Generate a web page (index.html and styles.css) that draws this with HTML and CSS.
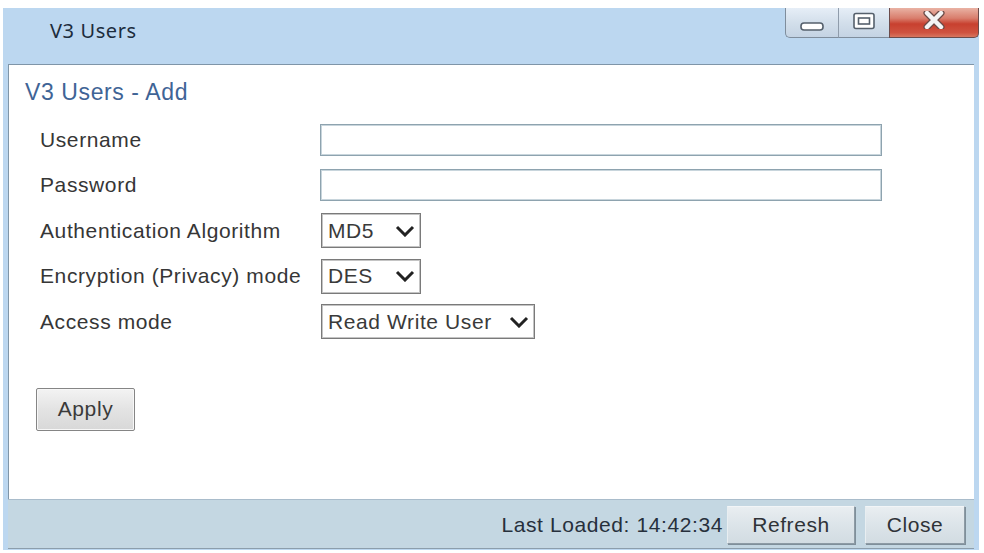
FILE: index.html
```html
<!DOCTYPE html>
<html>
<head>
<meta charset="utf-8">
<title>V3 Users</title>
<link rel="stylesheet" href="styles.css">
</head>
<body>
<div class="window">
  <div class="titlebar">
    <span class="title">V3 Users</span>
    <div class="controls">
      <div class="ctl ctl-min">
        <svg width="26" height="12" viewBox="0 0 26 12"><rect x="2" y="2" width="22" height="7" rx="3" fill="#fff" stroke="#55606c" stroke-width="1.6"/></svg>
      </div>
      <div class="ctl ctl-max">
        <svg width="24" height="18" viewBox="0 0 24 18"><rect x="2" y="1.5" width="20" height="15" rx="2" fill="#fff" stroke="#55606c" stroke-width="1.6"/><rect x="6.5" y="6" width="11" height="6" fill="#fff" stroke="#55606c" stroke-width="1.6"/></svg>
      </div>
      <div class="ctl ctl-close">
        <svg width="22" height="18" viewBox="0 0 22 18"><path d="M4 2 L18 16 M18 2 L4 16" stroke="#6a4a46" stroke-width="7" stroke-linecap="round"/><path d="M4 2 L18 16 M18 2 L4 16" stroke="#f4f4f4" stroke-width="4.5" stroke-linecap="round"/></svg>
      </div>
    </div>
  </div>
  <div class="body">
    <div class="panel">
      <div class="heading">V3 Users - Add</div>
      <div class="form">
        <div class="label">Username</div>
        <div class="field"><div class="input"></div></div>
        <div class="label">Password</div>
        <div class="field"><div class="input"></div></div>
        <div class="label">Authentication Algorithm</div>
        <div class="field">
          <div class="select select-short"><span>MD5</span><svg class="chev" width="20" height="12" viewBox="0 0 20 12"><polyline points="2,2 10,10 18,2" fill="none" stroke="#222" stroke-width="3"/></svg></div>
        </div>
        <div class="label">Encryption (Privacy) mode</div>
        <div class="field">
          <div class="select select-short"><span>DES</span><svg class="chev" width="20" height="12" viewBox="0 0 20 12"><polyline points="2,2 10,10 18,2" fill="none" stroke="#222" stroke-width="3"/></svg></div>
        </div>
        <div class="label">Access mode</div>
        <div class="field">
          <div class="select select-long"><span>Read Write User</span><svg class="chev" width="20" height="12" viewBox="0 0 20 12"><polyline points="2,2 10,10 18,2" fill="none" stroke="#222" stroke-width="3"/></svg></div>
        </div>
      </div>
      <div class="apply-wrap"><button class="btn btn-apply">Apply</button></div>
    </div>
    <div class="footer">
      <span class="loaded">Last Loaded: 14:42:34</span>
      <button class="btn btn-foot btn-refresh">Refresh</button>
      <button class="btn btn-foot btn-close">Close</button>
    </div>
  </div>
</div>
</body>
</html>
```
FILE: styles.css
```css
html, body {
  margin: 0;
  padding: 0;
  background: #ffffff;
}

body {
  font-family: "Liberation Sans", Arial, sans-serif;
  color: #333333;
}

.window {
  margin: 8px 0 0 3px;
  width: 976px;
  height: 542px;
  background: #bcd7f0;
  display: flex;
  flex-direction: column;
  box-sizing: border-box;
}

.titlebar {
  height: 56px;
  display: flex;
  flex-shrink: 0;
}

.title {
  font-family: "Noto Sans", "Open Sans", sans-serif;
  font-size: 20px;
  letter-spacing: 0.6px;
  line-height: 24px;
  color: #1c2c3c;
  margin: 11px 0 0 47px;
}

.controls {
  margin-left: auto;
  display: flex;
  height: 30px;
  align-self: flex-start;
}

.ctl {
  display: flex;
  align-items: center;
  justify-content: center;
  box-sizing: border-box;
  height: 30px;
}

.ctl-min {
  width: 53px;
  background: linear-gradient(#e6eef7, #d3dfeb 50%, #c4d3e3);
  border: 1px solid #7f8d9c;
  border-top: none;
  border-right: none;
  border-bottom-left-radius: 5px;
  padding-top: 8px;
}

.ctl-max {
  width: 51px;
  background: linear-gradient(#e6eef7, #d3dfeb 50%, #c4d3e3);
  border-bottom: 1px solid #7f8d9c;
  border-left: 1px solid #8f9cab;
  padding-bottom: 4px;
}

.ctl-close {
  width: 90px;
  background: linear-gradient(#e9b2a4 0%, #d97e6d 35%, #c8402f 55%, #cf5340 85%, #d8765f 100%);
  border: 1px solid #6b4b4b;
  border-top: none;
  border-bottom-right-radius: 5px;
  padding-bottom: 5px;
}

.body {
  flex: 1;
  display: flex;
  flex-direction: column;
  margin: 0 5px 1px 5px;
}

.panel {
  flex: 1;
  background: #ffffff;
  border-top: 1px solid #7f95a8;
  border-left: 1px solid #7f95a8;
  padding: 13px 0 0 16px;
}

.heading {
  font-size: 23px;
  letter-spacing: 0.6px;
  line-height: 28px;
  color: #3f6496;
}

.form {
  margin: 11px 0 0 15px;
  display: grid;
  grid-template-columns: 280px auto;
  grid-auto-rows: 45.5px;
  align-items: center;
}

.label {
  font-size: 21px;
  letter-spacing: 0.6px;
  color: #363636;
}

.field {
  display: flex;
  align-items: center;
}

.input {
  width: 562px;
  height: 32px;
  box-sizing: border-box;
  border: 1px solid #8ea3af;
  box-shadow: inset 0 0 0 1px #c8d5dc;
  background: #ffffff;
}

.select {
  margin-left: 1px;
  height: 35px;
  box-sizing: border-box;
  border: 1px solid #7a7a7a;
  box-shadow: inset 0 0 0 1px #c4c4c4;
  display: flex;
  align-items: center;
  justify-content: space-between;
  padding: 0 5px 0 6px;
  font-size: 21px;
  letter-spacing: 0.6px;
  color: #3a3a3a;
}

.select-short {
  width: 100px;
}

.select-long {
  width: 214px;
}

.chev {
  flex-shrink: 0;
}

.apply-wrap {
  margin: 43px 0 0 11px;
}

.btn {
  font-family: "Liberation Sans", Arial, sans-serif;
  font-size: 21px;
  letter-spacing: 0.6px;
  color: #3a3a3a;
  box-sizing: border-box;
  padding: 0;
  cursor: default;
}

.btn-apply {
  width: 99px;
  height: 43px;
  background: linear-gradient(#f3f3f3, #e3e3e3 50%, #d8d8d8);
  border: 1px solid #858585;
  box-shadow: inset 0 0 0 1px #f7f7f7;
  border-radius: 2px;
}

.footer {
  height: 50px;
  box-sizing: border-box;
  background: #c4d7e2;
  border-top: 1px solid #a9bccb;
  border-bottom: 1px solid #8c9eac;
  display: flex;
  align-items: center;
  justify-content: flex-end;
  padding: 1px 9px 0 0;
}

.loaded {
  font-size: 21px;
  letter-spacing: 0.6px;
  color: #27303c;
  margin-right: 4px;
}

.btn-foot {
  height: 38px;
  background: linear-gradient(#e9eef1, #dce4e9 50%, #d2dce2);
  border: 1px solid #8d9ba5;
  border-top-color: #f2f5f7;
  border-left-color: #e8eef1;
  box-shadow: 1px 1px 0 #7f8f9a;
  color: #2f3338;
}

.btn-refresh {
  width: 128px;
  margin-right: 10px;
}

.btn-close {
  width: 100px;
}
```
